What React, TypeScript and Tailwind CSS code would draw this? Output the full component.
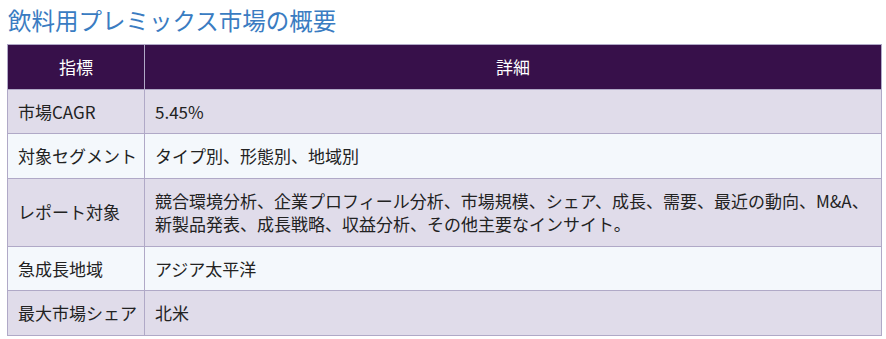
import React from "react";

const rows: [string, string[]][] = [
  ["市場CAGR", ["5.45%"]],
  ["対象セグメント", ["タイプ別、形態別、地域別"]],
  [
    "レポート対象",
    [
      "競合環境分析、企業プロフィール分析、市場規模、シェア、成長、需要、最近の動向、M&A、",
      "新製品発表、成長戦略、収益分析、その他主要なインサイト。",
    ],
  ],
  ["急成長地域", ["アジア太平洋"]],
  ["最大市場シェア", ["北米"]],
];

export default function App() {
  return (
    <div
      className="bg-white w-[886px] h-[339px] px-[7px] pt-[5px]"
      style={{ fontFamily: '"Noto Sans CJK JP", "Noto Sans", sans-serif' }}
    >
      <h2 className="text-[23.5px] leading-[30px] text-[#3a7cc2] pl-[1px] mb-[9px] font-normal whitespace-nowrap">
        飲料用プレミックス市場の概要
      </h2>
      <table className="w-[875px] table-fixed border-collapse text-[17px] text-[#222]">
        <colgroup>
          <col className="w-[137px]" />
          <col />
        </colgroup>
        <thead>
          <tr className="bg-[#37104a] text-white">
            <th className="border border-[#b0a9c7] py-[10px] leading-[23.5px] font-normal text-center">
              指標
            </th>
            <th className="border border-[#b0a9c7] py-[10px] leading-[23.5px] font-normal text-center">
              詳細
            </th>
          </tr>
        </thead>
        <tbody>
          {rows.map(([k, v], i) => (
            <tr key={k} className={i % 2 === 0 ? "bg-[#e0dcea]" : "bg-[#f4f8fc]"}>
              <td className="border border-[#b0a9c7] pl-[10px] pr-0 py-[10px] leading-[23.5px] align-middle whitespace-nowrap overflow-visible">
                {k}
              </td>
              <td className="border border-[#b0a9c7] px-[10px] py-[10px] leading-[23.5px] align-middle">
                {v.map((line) => (
                  <div key={line} className="whitespace-nowrap">
                    {line}
                  </div>
                ))}
              </td>
            </tr>
          ))}
        </tbody>
      </table>
    </div>
  );
}
